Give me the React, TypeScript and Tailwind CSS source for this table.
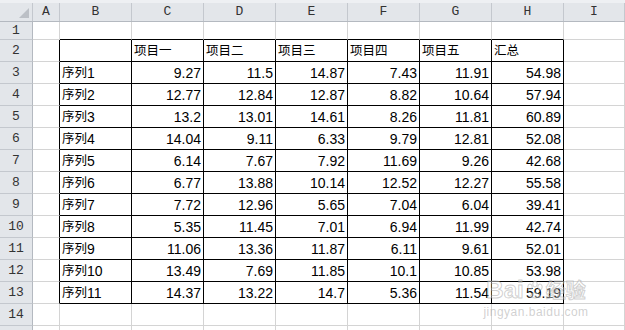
const cols = ['A', 'B', 'C', 'D', 'E', 'F', 'G', 'H', 'I'];
const colWidths = [27, 72, 72, 72, 72, 72, 72, 72, 61];

const headers = ['项目一', '项目二', '项目三', '项目四', '项目五', '汇总'];

const data: number[][] = [
  [9.27, 11.5, 14.87, 7.43, 11.91, 54.98],
  [12.77, 12.84, 12.87, 8.82, 10.64, 57.94],
  [13.2, 13.01, 14.61, 8.26, 11.81, 60.89],
  [14.04, 9.11, 6.33, 9.79, 12.81, 52.08],
  [6.14, 7.67, 7.92, 11.69, 9.26, 42.68],
  [6.77, 13.88, 10.14, 12.52, 12.27, 55.58],
  [7.72, 12.96, 5.65, 7.04, 6.04, 39.41],
  [5.35, 11.45, 7.01, 6.94, 11.99, 42.74],
  [11.06, 13.36, 11.87, 6.11, 9.61, 52.01],
  [13.49, 7.69, 11.85, 10.1, 10.85, 53.98],
  [14.37, 13.22, 14.7, 5.36, 11.54, 59.19],
];

const rowHeights: Record<number, number> = { 1: 18, 2: 22 };

function Cell({ row, col }: { row: number; col: number }) {
  // col index: 0 = A, 1 = B ... 7 = H, 8 = I
  const inTable = row >= 2 && row <= 13 && col >= 1 && col <= 7;
  const rightBlack = (row >= 2 && row <= 13 && col >= 0 && col <= 7);
  const bottomBlack = (row >= 1 && row <= 13 && col >= 1 && col <= 7);
  const cls = [
    'box-border flex items-center overflow-hidden whitespace-nowrap border-r border-b',
    rightBlack ? 'border-r-black' : 'border-r-[#d4d4d4]',
    bottomBlack ? 'border-b-black' : 'border-b-[#d4d4d4]',
  ].join(' ');

  let content: React.ReactNode = null;
  let align = 'justify-start pl-[2px]';
  if (inTable) {
    if (row === 2) {
      if (col >= 2) content = <span className="text-[12.5px]">{headers[col - 2]}</span>;
    } else if (col === 1) {
      content = (
        <>
          <span className="text-[12.5px]">序列</span>
          {row - 2}
        </>
      );
    } else {
      content = data[row - 3][col - 2];
      align = 'justify-end pr-[2px]';
    }
  }

  return (
    <div className={`${cls} ${align} pt-[1px]`} style={{ width: colWidths[col] }}>
      {content}
    </div>
  );
}

export default function App() {
  const rows = Array.from({ length: 15 }, (_, i) => i + 1);

  return (
    <div className="relative w-[625px] h-[330px] overflow-hidden bg-white text-[14px] text-black font-['Liberation_Sans','Noto_Sans_CJK_SC',sans-serif]">
      <div className="h-[4px] bg-[#eef0f3] border-b border-[#b4b9c0]" />

      {/* column headers */}
      <div className="flex h-[18px] bg-[#e3e6ea] border-b border-[#b4b9c0] box-content -mt-px">
        <div className="relative w-[33px] shrink-0 border-r border-[#c4c8ce]">
          <svg className="absolute right-[3px] bottom-[3px]" width="10" height="10" viewBox="0 0 10 10">
            <polygon points="10,0 10,10 0,10" fill="#bcc0c6" />
          </svg>
        </div>
        {cols.map((c, i) => (
          <div
            key={c}
            className="shrink-0 flex items-center justify-center border-r border-[#c4c8ce] text-[13px] text-[#333] font-['Liberation_Mono',monospace]"
            style={{ width: colWidths[i] }}
          >
            {c}
          </div>
        ))}
      </div>

      {rows.map((r) => (
        <div key={r} className="flex" style={{ height: rowHeights[r] ?? 22 }}>
          <div className="w-[33px] shrink-0 box-border flex items-center justify-center bg-[#e3e6ea] border-r border-b border-r-[#b4b9c0] border-b-[#c4c8ce] text-[13px] text-[#333] font-['Liberation_Mono',monospace]">
            {r}
          </div>
          {cols.map((_, ci) => (
            <Cell key={ci} row={r} col={ci} />
          ))}
        </div>
      ))}

      {/* watermark */}
      <div className="absolute left-[480px] top-[278px] w-[112px] flex flex-col items-center pointer-events-none select-none">
        <div className="flex items-center text-[24px] leading-none font-bold text-white/40 [-webkit-text-stroke:1px_rgba(150,150,150,0.45)]">
          <span>Bai</span>
          <svg width="20" height="20" viewBox="0 0 20 20" className="mx-[1px]">
            <g fill="rgba(255,255,255,0.4)" stroke="rgba(150,150,150,0.45)" strokeWidth="1">
              <ellipse cx="5" cy="7" rx="2.2" ry="3" />
              <ellipse cx="10" cy="4" rx="2.2" ry="3" />
              <ellipse cx="15" cy="7" rx="2.2" ry="3" />
              <path d="M4 17 Q10 8 16 17 Q10 19 4 17 Z" />
            </g>
          </svg>
          <span className="text-[20px] font-['Noto_Sans_CJK_SC',sans-serif]">经验</span>
        </div>
        <div className="mt-[4px] text-[12px] leading-none tracking-[0.5px] text-[rgba(170,170,170,0.55)]">jingyan.baidu.com</div>
      </div>
    </div>
  );
}
